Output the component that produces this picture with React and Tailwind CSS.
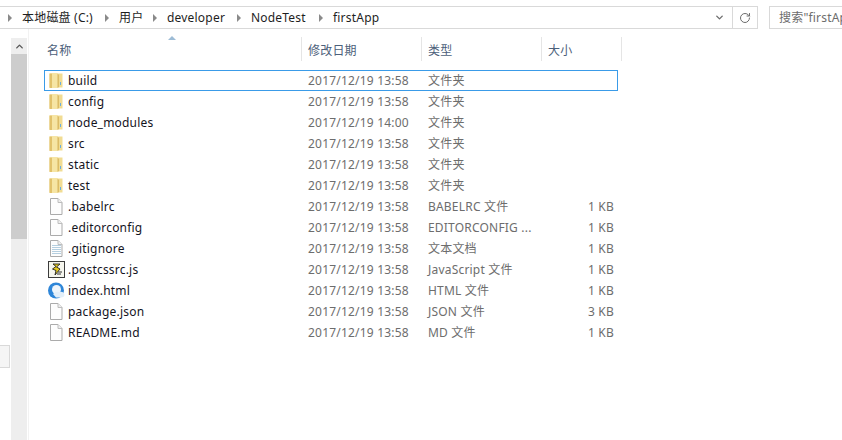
import React from 'react';
import { ChevronUp, ChevronDown, RotateCw } from 'lucide-react';

const font = { fontFamily: '"Noto Sans", "Noto Sans CJK SC", sans-serif' };

const crumbs = ['本地磁盘 (C:)', '用户', 'developer', 'NodeTest', 'firstApp'];
const crumbWidths = ['w-[97px]', 'w-[48px]', 'w-[84px]', 'w-[82px]', 'w-[70px]'];

const files = [
  { name: 'build', date: '2017/12/19 13:58', type: '文件夹', icon: 'folder', selected: true },
  { name: 'config', date: '2017/12/19 13:58', type: '文件夹', icon: 'folder' },
  { name: 'node_modules', date: '2017/12/19 14:00', type: '文件夹', icon: 'folder' },
  { name: 'src', date: '2017/12/19 13:58', type: '文件夹', icon: 'folder' },
  { name: 'static', date: '2017/12/19 13:58', type: '文件夹', icon: 'folder' },
  { name: 'test', date: '2017/12/19 13:58', type: '文件夹', icon: 'folder' },
  { name: '.babelrc', date: '2017/12/19 13:58', type: 'BABELRC 文件', size: '1 KB', icon: 'file' },
  { name: '.editorconfig', date: '2017/12/19 13:58', type: 'EDITORCONFIG ...', size: '1 KB', icon: 'file' },
  { name: '.gitignore', date: '2017/12/19 13:58', type: '文本文档', size: '1 KB', icon: 'text' },
  { name: '.postcssrc.js', date: '2017/12/19 13:58', type: 'JavaScript 文件', size: '1 KB', icon: 'script' },
  { name: 'index.html', date: '2017/12/19 13:58', type: 'HTML 文件', size: '1 KB', icon: 'browser' },
  { name: 'package.json', date: '2017/12/19 13:58', type: 'JSON 文件', size: '3 KB', icon: 'file' },
  { name: 'README.md', date: '2017/12/19 13:58', type: 'MD 文件', size: '1 KB', icon: 'file' },
];

const FolderIcon = () => (
  <svg width="16" height="17" viewBox="0 0 16 17">
    <path d="M1.5 1.5 H14.5 V15.5 H1.5 Z" fill="#f1dc93" />
    <path d="M1.5 1.5 H4 V16 H1.5 Z" fill="#e2c26c" />
    <path d="M4 1 H9.5 V16 H4 Z" fill="#f6e5a4" />
    <path d="M9.5 1.5 L11 3 V15 L9.5 16 Z" fill="#dcbc66" />
    <rect x="12" y="10" width="1" height="3" fill="#6aaedf" />
  </svg>
);

const FileIcon = ({ lines }) => (
  <svg width="16" height="17" viewBox="0 0 16 17">
    <path d="M2.5 0.5 H10 L14 4.5 V16.5 H2.5 Z" fill="#fdfdfd" stroke="#ababab" />
    <path d="M10 0.5 V4.5 H14" fill="#efefef" stroke="#bdbdbd" />
    {lines && [5, 7, 9, 11, 13].map((y) => <rect key={y} x="4" y={y} width="9" height="1" fill="#b5cfe0" />)}
  </svg>
);

const ScriptIcon = () => (
  <svg width="17" height="17" viewBox="0 0 17 17">
    <rect x="0.5" y="0.5" width="16" height="16" fill="#f6f6ee" stroke="#3c3c3c" />
    <path d="M5 3 H12 L8.5 6 L12 8 L7 14 L8 9.5 L4.5 8 L8 5.5 Z" fill="#e8cc1c" stroke="#1f1f1f" strokeWidth="0.9" />
    <path d="M10 11 H14 M9 13 H13" stroke="#333" />
  </svg>
);

const BrowserIcon = () => (
  <svg width="17" height="17" viewBox="0 0 17 17">
    <circle cx="8" cy="8.5" r="8" fill="#2e86d8" />
    <circle cx="8.5" cy="7.5" r="4.5" fill="#eef5fb" />
    <path d="M5 12 Q8 9 11 10 Q16 9 16.5 13 Q16 15.5 13 15.5 H8 Z" fill="#e3eff9" />
  </svg>
);

const icons = {
  folder: <FolderIcon />,
  file: <FileIcon />,
  text: <FileIcon lines />,
  script: <ScriptIcon />,
  browser: <BrowserIcon />,
};

const App = () => {
  return (
    <div className="w-[842px] h-[440px] bg-white overflow-hidden flex flex-col text-xs tracking-[0.2px]" style={font}>
      <div className="flex h-[23px] mt-1.5 shrink-0">
        <div className="w-[758px] flex items-center border-y border-r border-[#d9d9d9]">
          <div className="flex-1 flex items-center pl-[8px] text-[#1e1e1e]">
            {crumbs.map((c, i) => (
              <div key={c} className={`flex items-center gap-[10px] ${crumbWidths[i]}`}>
                <span className="w-0 h-0 border-y-[4px] border-y-transparent border-l-[4px] border-l-[#8a8a8a]" />
                <span className="whitespace-nowrap">{c}</span>
              </div>
            ))}
          </div>
          <div className="w-[25px] flex justify-center text-[#6d6d6d]"><ChevronDown size={11} strokeWidth={3} /></div>
          <div className="w-[25px] h-full flex items-center justify-center border-l border-[#d9d9d9] text-[#6d6d6d]">
            <RotateCw size={12} strokeWidth={2} />
          </div>
        </div>
        <div className="ml-[11px] flex-1 border-y border-l border-[#d9d9d9] pl-[9px] flex items-center text-[#6d6d6d] whitespace-nowrap overflow-hidden">
          搜索"firstApp"
        </div>
      </div>
      <div className="flex flex-1 min-h-0">
        <div className="w-[11px] flex flex-col shrink-0">
          <div className="mt-[316px] w-[10px] h-[23px] bg-[#f5f5f5] border border-l-0 border-[#d9d9d9]" />
        </div>
        <div className="w-[16px] mt-[9px] bg-[#eeeeee] flex flex-col shrink-0">
          <div className="h-[16px] flex items-center justify-center text-[#555]"><ChevronUp size={11} strokeWidth={3} /></div>
          <div className="h-[185px] bg-[#cdcdcd]" />
        </div>
        <div className="ml-[1px] w-[1px] bg-[#f2f2f2] shrink-0" />
        <div className="flex-1 min-w-0">
          <div className="relative flex h-[24px] mt-[8px] text-[#4c607a]">
            <span className="absolute left-[139px] -top-[1px] w-0 h-0 border-x-[4px] border-x-transparent border-b-[4px] border-b-[#9dbcd6]" />
            <div className="w-[273px] pl-[18px] pt-[3px] flex items-center border-r border-[#e5e5e5]">名称</div>
            <div className="w-[120px] pl-[6px] pt-[3px] flex items-center border-r border-[#e5e5e5]">修改日期</div>
            <div className="w-[120px] pl-[6px] pt-[3px] flex items-center border-r border-[#e5e5e5]">类型</div>
            <div className="w-[80px] pl-[6px] pt-[3px] flex items-center border-r border-[#e5e5e5]">大小</div>
          </div>
          <div className="mt-[9px] ml-[15px] w-[574px]">
            {files.map((f) => (
              <div key={f.name} className={`flex items-center h-[21px] ${f.selected ? 'border border-[#3a9be8]' : 'border border-transparent'}`}>
                <div className="w-[22px] flex justify-center shrink-0">{icons[f.icon]}</div>
                <div className="w-[241px] pl-px text-[#14141e] whitespace-nowrap">{f.name}</div>
                <div className="w-[120px] text-[#6d6d6d] whitespace-nowrap">{f.date}</div>
                <div className="w-[120px] text-[#6d6d6d] whitespace-nowrap">{f.type}</div>
                <div className="w-[66px] text-right text-[#6d6d6d] whitespace-nowrap">{f.size}</div>
              </div>
            ))}
          </div>
        </div>
      </div>
    </div>
  );
};

export default App;
